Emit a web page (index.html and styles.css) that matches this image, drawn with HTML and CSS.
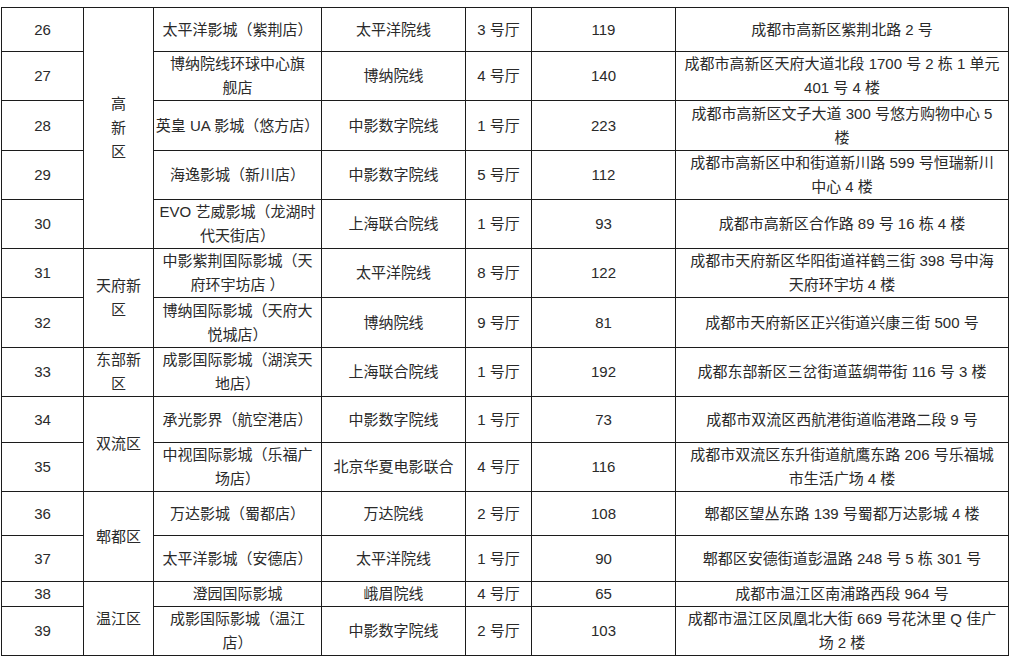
FILE: index.html
```html
<!DOCTYPE html>
<html lang="zh-CN">
<head>
<meta charset="utf-8">
<title>影城列表</title>
<link rel="stylesheet" href="styles.css">
</head>
<body>
<table class="grid">
<colgroup>
<col class="c-no"><col class="c-area"><col class="c-name"><col class="c-line"><col class="c-hall"><col class="c-seat"><col class="c-addr">
</colgroup>
<tbody>
<tr class="r44"><td>26</td><td rowspan="5">高<br>新<br>区</td><td>太平洋影城（紫荆店）</td><td>太平洋院线</td><td>3 号厅</td><td>119</td><td>成都市高新区紫荆北路 2 号</td></tr>
<tr class="r49"><td>27</td><td>博纳院线环球中心旗<br>舰店</td><td>博纳院线</td><td>4 号厅</td><td>140</td><td>成都市高新区天府大道北段 1700 号 2 栋 1 单元<br>401 号 4 楼</td></tr>
<tr class="r50"><td>28</td><td>英皇 UA 影城（悠方店）</td><td>中影数字院线</td><td>1 号厅</td><td>223</td><td>成都市高新区文子大道 300 号悠方购物中心 5<br>楼</td></tr>
<tr class="r49"><td>29</td><td>海逸影城（新川店）</td><td>中影数字院线</td><td>5 号厅</td><td>112</td><td>成都市高新区中和街道新川路 599 号恒瑞新川<br>中心 4 楼</td></tr>
<tr class="r49"><td>30</td><td>EVO 艺威影城（龙湖时<br>代天街店）</td><td>上海联合院线</td><td>1 号厅</td><td>93</td><td>成都市高新区合作路 89 号 16 栋 4 楼</td></tr>
<tr class="r49"><td>31</td><td rowspan="2">天府新<br>区</td><td>中影紫荆国际影城（天<br>府环宇坊店 ）</td><td>太平洋院线</td><td>8 号厅</td><td>122</td><td>成都市天府新区华阳街道祥鹤三街 398 号中海<br>天府环宇坊 4 楼</td></tr>
<tr class="r50"><td>32</td><td>博纳国际影城（天府大<br>悦城店）</td><td>博纳院线</td><td>9 号厅</td><td>81</td><td>成都市天府新区正兴街道兴康三街 500 号</td></tr>
<tr class="r49"><td>33</td><td>东部新<br>区</td><td>成影国际影城（湖滨天<br>地店）</td><td>上海联合院线</td><td>1 号厅</td><td>192</td><td>成都东部新区三岔街道蓝绸带街 116 号 3 楼</td></tr>
<tr class="r46"><td>34</td><td rowspan="2">双流区</td><td>承光影界（航空港店）</td><td>中影数字院线</td><td>1 号厅</td><td>73</td><td>成都市双流区西航港街道临港路二段 9 号</td></tr>
<tr class="r49"><td>35</td><td>中视国际影城（乐福广<br>场店）</td><td>北京华夏电影联合</td><td>4 号厅</td><td>116</td><td>成都市双流区东升街道航鹰东路 206 号乐福城<br>市生活广场 4 楼</td></tr>
<tr class="r44"><td>36</td><td rowspan="2">郫都区</td><td>万达影城（蜀都店）</td><td>万达院线</td><td>2 号厅</td><td>108</td><td>郫都区望丛东路 139 号蜀都万达影城 4 楼</td></tr>
<tr class="r46"><td>37</td><td>太平洋影城（安德店）</td><td>太平洋院线</td><td>1 号厅</td><td>90</td><td>郫都区安德街道彭温路 248 号 5 栋 301 号</td></tr>
<tr class="r24"><td>38</td><td rowspan="2">温江区</td><td>澄园国际影城</td><td>峨眉院线</td><td>4 号厅</td><td>65</td><td>成都市温江区南浦路西段 964 号</td></tr>
<tr class="r48"><td>39</td><td>成影国际影城（温江<br>店）</td><td>中影数字院线</td><td>2 号厅</td><td>103</td><td>成都市温江区凤凰北大街 669 号花沐里 Q 佳广<br>场 2 楼</td></tr>
</tbody>
</table>
</body>
</html>
```
FILE: styles.css
```css
html, body {
  margin: 0;
  padding: 0;
  background: #ffffff;
}

body {
  padding: 7px 0 0 1px;
  font-family: "Liberation Sans", "Noto Sans CJK SC", sans-serif;
  font-size: 15px;
  color: #2a2a2a;
}

.grid {
  border-collapse: collapse;
  table-layout: fixed;
  width: 1007px;
}

.c-no { width: 82px; }
.c-area { width: 70px; }
.c-name { width: 168px; }
.c-line { width: 144px; }
.c-hall { width: 66px; }
.c-seat { width: 144px; }
.c-addr { width: 333px; }

.grid td {
  border: 1px solid #1c1c1c;
  padding: 0;
  text-align: center;
  vertical-align: middle;
  line-height: 24px;
  white-space: nowrap;
  overflow: hidden;
}

.r44 { height: 44px; }
.r46 { height: 46px; }
.r48 { height: 48px; }
.r49 { height: 49px; }
.r50 { height: 50px; }
.r24 { height: 24px; }
```
